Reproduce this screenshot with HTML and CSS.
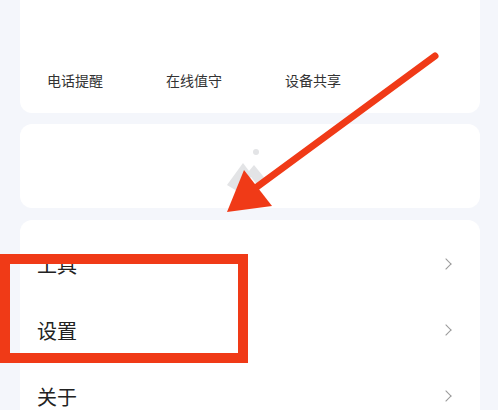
FILE: index.html
```html
<!DOCTYPE html>
<html>
<head>
    <meta charset="UTF-8">
    <meta name="viewport" content="width=device-width, initial-scale=1.0">
    <title>我的</title>
    <link rel="stylesheet" href="styles.css">
</head>
<body>
    <div class="page">
        <div class="card quick-card">
            <div class="quick-list">
                <span class="quick-item">电话提醒</span>
                <span class="quick-item">在线值守</span>
                <span class="quick-item">设备共享</span>
            </div>
        </div>

        <div class="card banner-card">
            <svg class="placeholder" width="48" height="48" viewBox="0 0 48 48">
                <circle cx="33" cy="7" r="3" fill="#e3e4e6"/>
                <path d="M4 40 L20 18 L26 26 L31 20 L44 36 L36 42 L28 32 L14 46 Z" fill="#e3e4e6"/>
            </svg>
        </div>

        <div class="card menu-card">
            <div class="menu-item">
                <span>工具</span>
                <span class="chevron"></span>
            </div>
            <div class="menu-item">
                <span>设置</span>
                <span class="chevron"></span>
            </div>
            <div class="menu-item">
                <span>关于</span>
                <span class="chevron"></span>
            </div>
        </div>
    </div>

    <!-- annotation overlay -->
    <div class="mark-box"></div>
    <svg class="mark-arrow" width="498" height="410" viewBox="0 0 498 410">
        <line x1="435" y1="56" x2="250" y2="192" stroke="#f03a17" stroke-width="7" stroke-linecap="round"/>
        <polygon points="227,212 244,170 272,206" fill="#f03a17"/>
    </svg>
</body>
</html>
```

FILE: styles.css
```css
body {
    font-family: "Noto Sans CJK SC", "Noto Sans", sans-serif;
    margin: 0;
    padding: 0;
    background-color: #f4f6fb;
    color: #222;
    overflow: hidden;
}

.page {
    margin: 0 18px 0 20px;
    height: 410px;
    overflow: hidden;
}

.card {
    background: #fff;
    border-radius: 12px;
}

.quick-card {
    margin-top: -20px;
    height: 133px;
    display: flex;
    flex-direction: column;
    justify-content: flex-end;
}

.quick-list {
    display: flex;
    padding: 0 0 23px 27px;
}

.quick-item {
    width: 119px;
    font-size: 14px;
    color: #333;
    line-height: 20px;
}

.banner-card {
    margin-top: 11px;
    height: 84px;
    display: flex;
    justify-content: center;
    align-items: center;
}

.placeholder {
    margin-left: -6px;
    margin-top: 6px;
}

.menu-card {
    margin-top: 12px;
    padding-top: 11px;
}

.menu-item {
    height: 66px;
    display: flex;
    align-items: center;
    justify-content: space-between;
    padding: 0 30px 0 17px;
    font-size: 20px;
}

.chevron {
    width: 7px;
    height: 7px;
    border-top: 1.5px solid #999;
    border-right: 1.5px solid #999;
    transform: rotate(45deg);
}

.mark-box {
    position: absolute;
    left: 0;
    top: 254px;
    width: 228px;
    height: 89px;
    border: 10px solid #f03a17;
}

.mark-arrow {
    position: absolute;
    left: 0;
    top: 0;
}
```
